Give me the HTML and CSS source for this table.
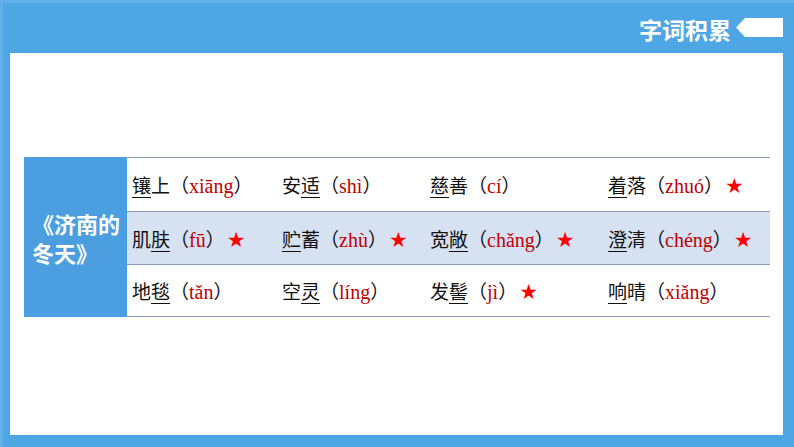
FILE: index.html
```html
<!DOCTYPE html>
<html lang="zh-CN">
<head>
<meta charset="utf-8">
<title>字词积累</title>
<link rel="stylesheet" href="styles.css">
</head>
<body>
<div class="page">
  <header class="header">
    <h1 class="title">字词积累</h1>
    <svg class="arrow" width="47" height="19" viewBox="0 0 47 19"><polygon points="9,0 47,0 47,19 9,19 0,9.5" fill="#fff"/></svg>
  </header>
  <main class="panel">
    <div class="table">
      <div class="side">《济南的<br>冬天》</div>
      <div class="row">
        <div class="cell"><span class="u">镶</span>上（<span class="py">xiāng</span>）</div>
        <div class="cell">安<span class="u">适</span>（<span class="py">shì</span>）</div>
        <div class="cell"><span class="u">慈</span>善（<span class="py">cí</span>）</div>
        <div class="cell"><span class="u">着</span>落（<span class="py">zhuó</span>）<span class="star">★</span></div>
      </div>
      <div class="row alt">
        <div class="cell">肌<span class="u">肤</span>（<span class="py">fū</span>）<span class="star">★</span></div>
        <div class="cell"><span class="u">贮</span>蓄（<span class="py">zhù</span>）<span class="star">★</span></div>
        <div class="cell">宽<span class="u">敞</span>（<span class="py">chǎng</span>）<span class="star">★</span></div>
        <div class="cell"><span class="u">澄</span>清（<span class="py">chéng</span>）<span class="star">★</span></div>
      </div>
      <div class="row">
        <div class="cell">地<span class="u">毯</span>（<span class="py">tǎn</span>）</div>
        <div class="cell">空<span class="u">灵</span>（<span class="py">líng</span>）</div>
        <div class="cell">发<span class="u">髻</span>（<span class="py">jì</span>）<span class="star">★</span></div>
        <div class="cell"><span class="u">响</span>晴（<span class="py">xiǎng</span>）</div>
      </div>
    </div>
  </main>
</div>
</body>
</html>
```
FILE: styles.css
```css
html, body {
  margin: 0;
  padding: 0;
}
body {
  width: 794px;
  height: 447px;
  background: #4fa6e4;
  box-shadow: inset 3px 3px 0 #62b0e9;
  overflow: hidden;
  font-family: "Noto Sans CJK SC", sans-serif;
}
.page {
  display: flex;
  flex-direction: column;
}
.header {
  height: 53px;
  box-sizing: border-box;
  display: flex;
  justify-content: flex-end;
  align-items: flex-start;
  padding-right: 11px;
  padding-top: 14px;
  gap: 5px;
}
.title {
  margin: 0;
  color: #fff;
  font-family: "Noto Sans CJK SC", sans-serif;
  font-weight: 700;
  font-size: 23px;
  line-height: 30px;
}
.arrow {
  margin-top: 4px;
  display: block;
}
.panel {
  margin: 0 11px 0 10px;
  height: 382px;
  background: #fff;
  box-sizing: border-box;
  padding: 104px 13px 0 14px;
}
.table {
  display: grid;
  grid-template-columns: 103px 1fr;
  grid-template-rows: 54px 53px 53px;
}
.side {
  grid-column: 1;
  grid-row: 1 / span 3;
  background: #4b9fe1;
  color: #fff;
  font-weight: 700;
  font-size: 22px;
  line-height: 29px;
  display: flex;
  align-items: center;
  padding-left: 8px;
  padding-top: 1px;
}
.row {
  grid-column: 2;
  display: grid;
  grid-template-columns: 150px 148px 178px 167px;
  border-top: 1px solid #8d9cb6;
  align-items: center;
}
.row:last-child {
  border-bottom: 1px solid #8d9cb6;
}
.alt {
  background: #d6e1f2;
}
.cell {
  padding-left: 5px;
  font-size: 19px;
  color: #111;
  white-space: nowrap;
  font-family: "Noto Sans CJK SC", serif;
  font-weight: 400;
}
.u {
  text-decoration: underline;
  text-underline-offset: 4px;
  text-decoration-thickness: 1px;
}
.py {
  font-family: "Liberation Serif", serif;
  color: #c00000;
  font-size: 20px;
}
.star {
  color: #ff0000;
  font-family: "DejaVu Sans", sans-serif;
  font-size: 21px;
  margin-left: 2px;
}
```
